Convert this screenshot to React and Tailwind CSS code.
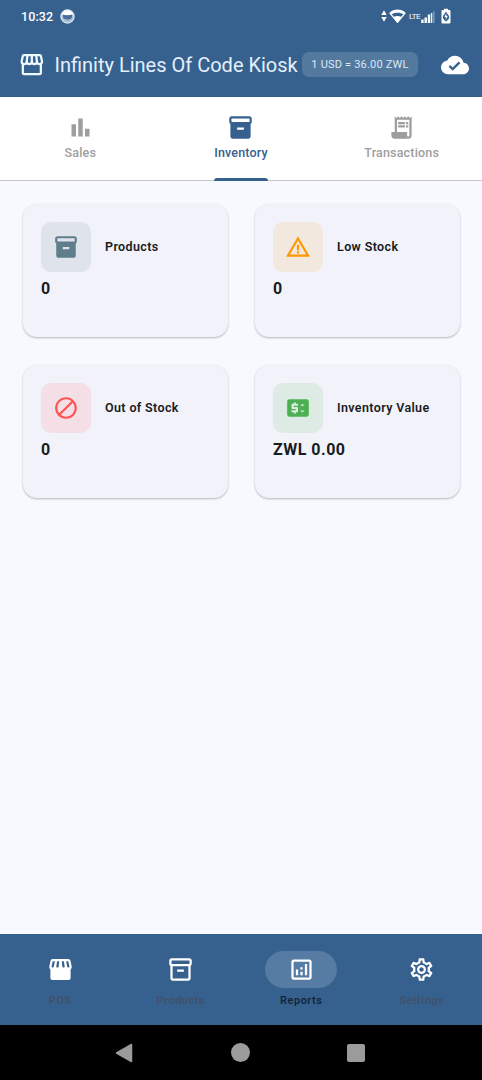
import React from "react";
import {
  MdCloudDone,
  MdBarChart,
  MdInventory2,
  MdReceiptLong,
  MdWarningAmber,
  MdBlock,
  MdPriceChange,
  MdOutlineInventory2,
  MdOutlineAnalytics,
  MdOutlineSettings,
} from "react-icons/md";

function StoreOutline({ className }) {
  return (
    <svg viewBox="0 0 24 24" className={className} fill="none" stroke="currentColor" strokeWidth="2" strokeLinejoin="round">
      <path d="M5.400 3.600h13.800c.6 0 1 .3 1.100.9l1 4.500c.3 1.500-.7 2.600-2.100 2.600-1.200 0-2.200-.7-2.300-1.800-.2 1.100-1.100 1.800-2.300 1.800s-2.200-.8-2.300-1.900c-.1 1.100-1.100 1.900-2.300 1.900s-2.100-.7-2.300-1.800c-.1 1.100-1.100 1.800-2.300 1.800C4 11.600 3 10.500 3.300 9l1-4.500c.1-.6.500-.9 1.100-.9z" />
      <path d="M8.400 3.600L7.700 9.800M12.300 3.600V9.700M16.200 3.600l.7 6.200M4.300 11.500V19.500c0 .6.400 1 1 1h14c.6 0 1-.4 1-1v-8" />
    </svg>
  );
}

function StoreFilled({ className }) {
  return (
    <svg viewBox="0 0 24 24" className={className}>
      <path
        fill="currentColor"
        fillRule="evenodd"
        d="M5 2.700h14a2 2 0 0 1 1.900 1.500L21.900 9c.2 1.200-.1 2.100-.9 2.900V19.500a1.800 1.800 0 0 1-1.800 1.800H4.800A1.800 1.800 0 0 1 3 19.500v-7.600c-.8-.8-1.100-1.700-.9-2.900l1-4.800A2 2 0 0 1 5 2.700zM5.100 4.700L4.100 9c-.1.900.4 1.300.9 1.300s1-.4 1.100-1.100L7 4.700zM9 4.700L8.300 9c-.1.800.3 1.300.9 1.300s1.200-.4 1.200-1.100L10.800 4.700zM13.200 4.700l.4 4.500c0 .7.600 1.100 1.200 1.100s1-.5.9-1.300L15 4.700zM17 4.700l.9 4.500c.1.700.6 1.100 1.100 1.100s1-.4.9-1.300L18.900 4.700z"
      />
    </svg>
  );
}

function StatusBar() {
  return (
    <div className="flex h-8 items-center justify-between pl-[21px] pr-[31px] text-white">
      <div className="flex items-center gap-[7px] pt-px">
        <span className="text-[12.500px] leading-4 font-medium tracking-[0.100px]">10:32</span>
        <svg viewBox="0 0 16 16" className="size-[15px]">
          <circle cx="8" cy="8" r="7" fill="#a9bdd5" stroke="#dde8f4" strokeWidth="1.400" />
          <path d="M2 5.500C3 2.500 5.500 1.300 8 1.300s5 1.200 6 4.200c-1 1-3 .6-4 1.300-1-.5-3-.5-4 0-1-.7-3-.3-4-1.300z" fill="#fff" />
          <path d="M3.200 5.800c2 1 7.600 1 9.600 0v3c-.6 1.700-2.400 2.500-4.800 2.500s-4.200-.8-4.800-2.500z" fill="#4b6f9a" />
        </svg>
      </div>
      <div className="flex items-center">
        <svg viewBox="0 0 6 12" className="h-[12px] w-[6px]">
          <path d="M3 .2L5.700 5H.3zM3 11.800L.3 7h5.400z" fill="#fff" />
        </svg>
        <svg viewBox="0 0 18 16" className="ml-[2px] h-[16px] w-[17px]">
          <path d="M1 5C3.300 2.800 6 1.800 9 1.800s5.700 1 8 3.200l-8 9.600z" fill="none" stroke="#fff" strokeWidth="1.400" strokeLinejoin="round" />
          <path d="M1 5C3.300 2.800 6 1.800 9 1.800s5.700 1 8 3.200l-1.200 1.400C12 4 6 4 2.200 6.400zM4.800 9c2.400-1.500 6-1.500 8.400 0L9 14.600z" fill="#fff" />
        </svg>
        <span className="ml-[3px] mt-[2px] text-[8px] leading-4 tracking-[-0.500px]">LTE</span>
        <svg viewBox="0 0 14 12" className="ml-[1px] mt-px h-[12px] w-[14px]">
          <path d="M.2 8.500h2.400V12H.2zM3.500 6.500h2.400V12H3.500zM6.800 3.500h2.400V12H6.800z" fill="#fff" />
          <path d="M9.900 2h1.400v10H9.900z" fill="#e6eef6" />
          <path d="M12 .5h1.500V12H12z" fill="#7d9bbd" />
        </svg>
        <svg viewBox="0 0 10 16" className="ml-[6px] h-[16px] w-[10px]">
          <path d="M3 2V.8h4V2h1.600c.5 0 .9.400.9.900v11.700c0 .5-.4.900-.9.900H1.400a.9.900 0 0 1-.9-.9V2.900c0-.5.400-.9.900-.9z" fill="#fff" />
          <path d="M5 3.600L2 8c-.5 1.600.3 3.500 1.600 4.200L5 13.400l1.500-1.200C7.800 11.500 8.500 9.600 8 8z" fill="#36618e" />
          <path d="M5.400 5.200L3.400 9h1.400v2.700L6.700 8H5.400z" fill="#fff" />
        </svg>
      </div>
    </div>
  );
}

function AppBar() {
  return (
    <div className="flex h-[65px] items-center pl-[18px] pr-[13px]">
      <StoreOutline className="size-[27px] shrink-0 text-[#eef8ff]" />
      <h1 className="ml-[9.500px] w-[247.500px] whitespace-nowrap text-[20px] leading-7 font-normal text-[#e3effb]">
        Infinity Lines Of Code Kiosk
      </h1>
      <div className="flex h-[25px] w-[116px] shrink-0 items-center justify-center whitespace-nowrap rounded-[7px] bg-[#53799f] pt-[2px] text-[11px] tracking-[0.200px] text-[#dce8f5]">
        1 USD = 36.00 ZWL
      </div>
      <MdCloudDone className="ml-auto size-[28px] text-white" />
    </div>
  );
}

const tabs = [
  { label: "Sales", Icon: MdBarChart },
  { label: "Inventory", Icon: MdInventory2, active: true },
  { label: "Transactions", Icon: MdReceiptLong },
];

function Tabs() {
  return (
    <div className="grid h-[84px] grid-cols-3 border-b border-[#c5c7d0] bg-white">
      {tabs.map(({ label, Icon, active }) => (
        <div
          key={label}
          className={
            "flex flex-col items-center pt-[17px] " + (active ? "text-[#36618e]" : "text-[#9e9e9e]")
          }
        >
          <Icon className="size-[27px]" />
          <span className="mt-[3px] text-[12.500px] leading-[18px] font-medium tracking-[0.180px]">{label}</span>
          {active && <div className="mt-[16px] -mb-px h-[3px] w-[54px] rounded-t-[3px] bg-[#36618e]" />}
        </div>
      ))}
    </div>
  );
}

const cards = [
  { label: "Products", value: "0", Icon: MdInventory2, tone: "bg-[#dfe4ec] text-[#607d8b]" },
  { label: "Low Stock", value: "0", Icon: MdWarningAmber, tone: "bg-[#f3e8de] text-[#ff9800]" },
  { label: "Out of Stock", value: "0", Icon: MdBlock, tone: "bg-[#f4dfe6] text-[#ff5252]" },
  { label: "Inventory Value", value: "ZWL 0.00", Icon: MdPriceChange, tone: "bg-[#deebe4] text-[#4caf50]" },
];

function Cards() {
  return (
    <main className="grid flex-1 auto-rows-[133px] grid-cols-2 gap-x-[27px] gap-y-[28px] pl-[23px] pr-[22px] pt-[23px]">
      {cards.map(({ label, value, Icon, tone }) => (
        <section
          key={label}
          className="rounded-[14px] bg-[#f1f2fa] px-[18px] pt-[18px] shadow-[0_1px_2px_rgba(0,0,0,0.22),0_1px_3px_rgba(0,0,0,0.06)]"
        >
          <div className="flex items-center">
            <div className={"flex size-[50px] items-center justify-center rounded-[10px] " + tone}>
              <Icon className="size-[26px]" />
            </div>
            <h2 className="ml-[14px] whitespace-nowrap text-[12.500px] leading-5 font-semibold tracking-[0.370px] text-[#191c20]">
              {label}
            </h2>
          </div>
          <p className="mt-[6px] text-[16px] leading-[22px] font-bold tracking-[0.500px] text-[#191c20]">{value}</p>
        </section>
      ))}
    </main>
  );
}

const destinations = [
  { label: "POS", Icon: StoreFilled },
  { label: "Products", Icon: MdOutlineInventory2 },
  { label: "Reports", Icon: MdOutlineAnalytics, active: true },
  { label: "Settings", Icon: MdOutlineSettings },
];

function BottomNav() {
  return (
    <nav className="grid h-[91px] grid-cols-4 bg-[#36618e]">
      {destinations.map(({ label, Icon, active }) => (
        <div key={label} className="flex flex-col items-center pt-[17px]">
          <div
            className={
              "flex h-[37px] w-[72px] items-center justify-center rounded-full text-white " +
              (active ? "bg-[#567ca3]" : "")
            }
          >
            <Icon className="size-[27px]" />
          </div>
          <span
            className={
              "mt-[5px] text-[11px] leading-4 tracking-[0.500px] " +
              (active ? "font-semibold text-[#12253a]" : "font-semibold text-[#41506a]")
            }
          >
            {label}
          </span>
        </div>
      ))}
    </nav>
  );
}

function SystemNav() {
  return (
    <div className="flex h-[55px] items-center bg-black pl-[115px] text-[#9b9b9b]">
      <svg viewBox="0 0 18 20" className="h-[20px] w-[18px]">
        <path d="M16.500 1.500v17L1.500 10z" fill="currentColor" stroke="currentColor" strokeWidth="1.500" strokeLinejoin="round" />
      </svg>
      <div className="ml-[98px] size-[19px] rounded-full bg-[#9b9b9b]" />
      <div className="ml-[97px] size-[18px] rounded-[2px] bg-[#9b9b9b]" />
    </div>
  );
}

export default function App() {
  return (
    <div className="flex h-[1080px] w-[482px] flex-col overflow-hidden bg-[#f8f9ff] font-['Roboto',sans-serif]">
      <header className="h-[97px] shrink-0 bg-[#36618e]">
        <StatusBar />
        <AppBar />
      </header>
      <Tabs />
      <Cards />
      <BottomNav />
      <SystemNav />
    </div>
  );
}
